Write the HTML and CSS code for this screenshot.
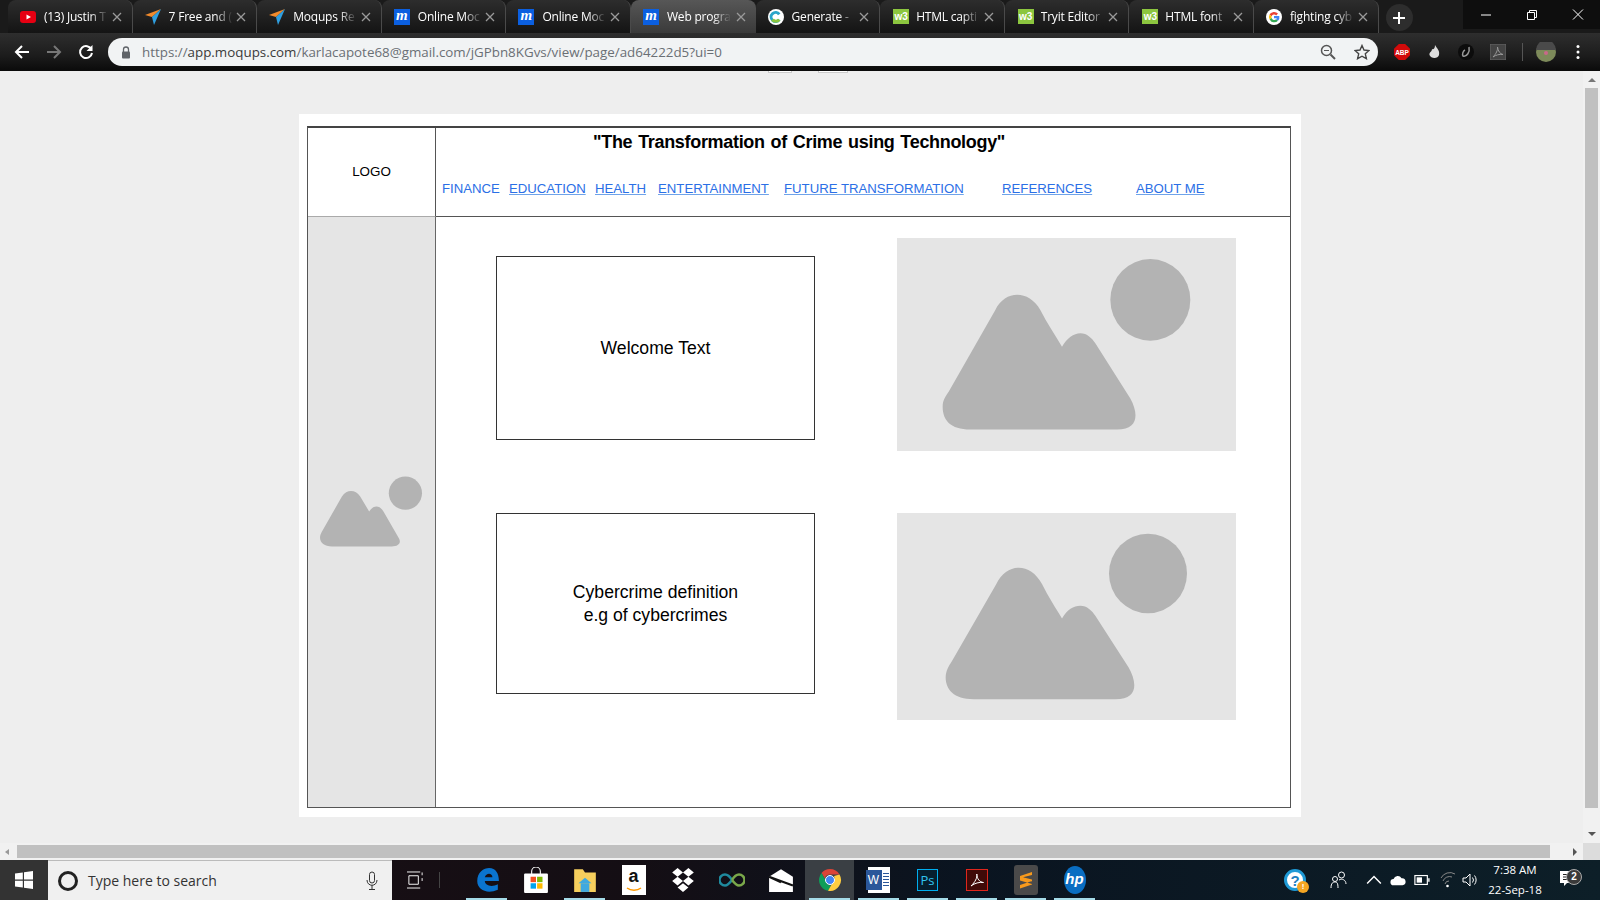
FILE: index.html
```html
<!DOCTYPE html>
<html lang="en">
<head>
<meta charset="utf-8">
<title>Web program</title>
<link rel="stylesheet" href="styles.css">
</head>
<body>
<svg class="defs" width="0" height="0" aria-hidden="true">
  <symbol id="plane" viewBox="0 0 16 16"><path d="M0 6 L16 0 L7 8 Z" fill="#f08a2c"/><path d="M16 0 L7 8 L9 16 Z" fill="#2f9fe0"/></symbol>
  <symbol id="close" viewBox="0 0 10 10"><path d="M1 1 L9 9 M9 1 L1 9" stroke="#9a9a9a" stroke-width="1.3" fill="none"/></symbol>
</svg>
<header class="tabstrip">
  <div class="tab">
    <svg class="favicon" viewBox="0 0 16 16"><rect x="0" y="2" width="16" height="12" rx="3" fill="#e60012"/><path d="M6.500 5.500 L11 8 L6.500 10.500 Z" fill="#fff"/></svg>
    <span class="tab-label">(13) Justin T</span>
    <svg class="tab-x"><use href="#close"/></svg>
  </div>
  <div class="tab">
    <svg class="favicon"><use href="#plane"/></svg>
    <span class="tab-label">7 Free and (</span>
    <svg class="tab-x"><use href="#close"/></svg>
  </div>
  <div class="tab">
    <svg class="favicon"><use href="#plane"/></svg>
    <span class="tab-label">Moqups Re</span>
    <svg class="tab-x"><use href="#close"/></svg>
  </div>
  <div class="tab">
    <span class="fav-m">m</span>
    <span class="tab-label">Online Moc</span>
    <svg class="tab-x"><use href="#close"/></svg>
  </div>
  <div class="tab">
    <span class="fav-m">m</span>
    <span class="tab-label">Online Moc</span>
    <svg class="tab-x"><use href="#close"/></svg>
  </div>
  <div class="tab tab-active">
    <span class="fav-m">m</span>
    <span class="tab-label">Web progra</span>
    <svg class="tab-x"><use href="#close"/></svg>
  </div>
  <div class="tab">
    <svg class="favicon" viewBox="0 0 16 16"><circle cx="8" cy="8" r="8" fill="#fff"/><path d="M12.500 4.500 A6 6 0 1 0 12.500 11.500 L10 9.800 A3 3 0 1 1 10 6.200 Z" fill="#2aa5c9"/><path d="M3 11.500 A6 6 0 0 0 12.500 11.500 L10 9.800 A3 3 0 0 1 6 9.800 Z" fill="#8cc63f"/></svg>
    <span class="tab-label">Generate -</span>
    <svg class="tab-x"><use href="#close"/></svg>
  </div>
  <div class="tab">
    <span class="fav-w3">w3</span>
    <span class="tab-label">HTML capti</span>
    <svg class="tab-x"><use href="#close"/></svg>
  </div>
  <div class="tab">
    <span class="fav-w3">w3</span>
    <span class="tab-label">Tryit Editor</span>
    <svg class="tab-x"><use href="#close"/></svg>
  </div>
  <div class="tab">
    <span class="fav-w3">w3</span>
    <span class="tab-label">HTML font</span>
    <svg class="tab-x"><use href="#close"/></svg>
  </div>
  <div class="tab">
    <svg class="favicon" viewBox="0 0 16 16"><circle cx="8" cy="8" r="8" fill="#fff"/><path d="M12 4.600 A5.300 5.300 0 0 0 3.600 5.600 L5.600 7.200 A2.800 2.800 0 0 1 10.200 6.400 Z" fill="#ea4335"/><path d="M3.600 5.600 A5.300 5.300 0 0 0 3.600 10.600 L5.600 9 A2.800 2.800 0 0 1 5.600 7.200 Z" fill="#fbbc05"/><path d="M3.600 10.600 A5.300 5.300 0 0 0 12 11.800 L10.200 10.200 A2.800 2.800 0 0 1 5.600 9 Z" fill="#34a853"/><path d="M13.300 7 H8 V9.200 H10.800 A2.800 2.800 0 0 1 10.200 10.200 L12 11.800 A5.300 5.300 0 0 0 13.300 7 Z" fill="#4285f4"/></svg>
    <span class="tab-label">fighting cyb</span>
    <svg class="tab-x"><use href="#close"/></svg>
  </div>
  <div class="newtab"><svg viewBox="0 0 14 14" width="14" height="14"><path d="M7 1 V13 M1 7 H13" stroke="#fff" stroke-width="2"/></svg></div>
  <div class="winctl">
    <svg viewBox="0 0 46 29"><path d="M18 15 H28" stroke="#fff"/></svg>
    <svg viewBox="0 0 46 29"><path d="M18.500 12.500 H25.500 V19.500 H18.500 Z M20.500 12.500 V10.500 H27.500 V17.500 H25.500" stroke="#fff" fill="none"/></svg>
    <svg viewBox="0 0 46 29"><path d="M18 9.500 L28 19.500 M28 9.500 L18 19.500" stroke="#fff" fill="none"/></svg>
  </div>
</header>
<nav class="toolbar">
  <svg class="tb-btn" viewBox="0 0 16 16"><path d="M15 8 H2 M8 2 L2 8 L8 14" stroke="#fff" stroke-width="2" fill="none"/></svg>
  <svg class="tb-btn" viewBox="0 0 16 16"><path d="M1 8 H14 M8 2 L14 8 L8 14" stroke="#777" stroke-width="2" fill="none"/></svg>
  <svg class="tb-btn" viewBox="0 0 16 16"><path d="M13.500 5.500 A6 6 0 1 0 14 9" stroke="#fff" stroke-width="2" fill="none"/><path d="M14.500 1 V7 H8.500 Z" fill="#fff"/></svg>
  <div class="omnibox">
    <svg class="lock" viewBox="0 0 10 13"><path d="M2.500 6 V3.500 A2.500 2.500 0 0 1 7.500 3.500 V6" stroke="#5f6368" stroke-width="1.300" fill="none"/><rect x="1" y="5.500" width="8" height="7" rx="1" fill="#5f6368"/></svg>
    <div class="url"><span class="url-dim">https://</span>app.moqups.com<span class="url-dim">/karlacapote68@gmail.com/jGPbn8KGvs/view/page/ad64222d5?ui=0</span></div>
    <svg class="omni-icon" viewBox="0 0 16 16"><circle cx="6.500" cy="6.500" r="5" stroke="#555" stroke-width="1.500" fill="none"/><path d="M10.500 10.500 L15 15" stroke="#555" stroke-width="2"/><path d="M4 6.500 H9" stroke="#555"/></svg>
    <svg class="omni-icon" viewBox="0 0 16 16"><path d="M8 1.500 L10 6 L15 6.500 L11.300 9.800 L12.400 14.700 L8 12.200 L3.600 14.700 L4.700 9.800 L1 6.500 L6 6 Z" stroke="#444" stroke-width="1.400" fill="none"/></svg>
  </div>
  <div class="ext abp"><span>ABP</span></div>
  <svg class="ext" viewBox="0 0 16 16"><path d="M9 1 C11 5 14 6 13 11 C12 15 5 15 3.500 11 C3 8 6 8 6 5 C7 6 9 5 9 1 Z" fill="#ddd"/></svg>
  <svg class="ext" viewBox="0 0 16 16"><circle cx="8" cy="8" r="8" fill="#0c0c0c"/><path d="M11 3 C12 8 9 13 5 12 C4 10 5 7 7 6" stroke="#999" stroke-width="1.500" fill="none"/></svg>
  <svg class="ext" viewBox="0 0 16 16"><rect width="16" height="16" fill="#444" stroke="#666"/><path d="M3 13 C6 10 8 6 7.500 3 C8 7 10 10 13 10.500 C9 10 6 11 3 13 Z" stroke="#999" fill="none"/></svg>
  <div class="tb-sep"></div>
  <svg class="avatar" viewBox="0 0 20 20"><circle cx="10" cy="10" r="10" fill="#7d8a5a"/><path d="M0 8 A10 10 0 0 1 20 8 Z" fill="#4a4a4a"/><circle cx="10" cy="11" r="2" fill="#c9688a"/></svg>
  <svg class="kebab" viewBox="0 0 4 16"><circle cx="2" cy="2.500" r="1.500" fill="#fff"/><circle cx="2" cy="8" r="1.500" fill="#fff"/><circle cx="2" cy="13.500" r="1.500" fill="#fff"/></svg>
</nav>
<div class="viewport">
  <main class="page">
    <div class="clip-strip">
      <span class="clip-box"></span>
      <span class="clip-box clip-box-b"></span>
    </div>
    <section class="canvas">
      <div class="frame">
        <div class="logo">LOGO</div>
        <div class="head">
          <h1 class="title">"The Transformation of Crime using Technology"</h1>
          <div class="links">
            <span class="lnk-plain">FINANCE</span>
            <a class="lnk">EDUCATION</a>
            <a class="lnk">HEALTH</a>
            <a class="lnk">ENTERTAINMENT</a>
            <a class="lnk">FUTURE TRANSFORMATION</a>
            <a class="lnk">REFERENCES</a>
            <a class="lnk">ABOUT ME</a>
          </div>
        </div>
        <aside class="side">
          <svg class="side-img" viewBox="50 40 325 230"><path d="M95 260 C65 260 50 240 65 215 L125 110 C140 88 165 88 180 110 L207 155 C220 135 238 135 250 155 L296 235 C305 250 295 260 275 260 Z" fill="#b3b3b3"/><circle cx="316" cy="100" r="50" fill="#b3b3b3"/></svg>
        </aside>
        <div class="content">
          <div class="box box-a">Welcome Text</div>
          <svg class="img img-a" viewBox="20 25 1017 637" preserveAspectRatio="none"><path d="M240 598 C180 598 157 570 157 530 C157 510 165 500 175 485 L315 240 C345 180 415 180 450 240 C470 280 495 315 515 350 C530 325 550 310 570 310 C590 310 605 325 615 340 L720 505 C745 550 745 598 680 598 Z" fill="#b3b3b3"/><ellipse cx="780" cy="210" rx="120" ry="122" fill="#b3b3b3"/></svg>
          <div class="box box-b"><span>Cybercrime definition</span><span>e.g of cybercrimes</span></div>
          <svg class="img img-b" viewBox="20 22 1017 620" preserveAspectRatio="none"><path d="M250 580 C190 580 166 550 166 515 C166 495 175 480 185 465 L318 235 C350 170 420 170 455 235 C475 275 495 305 515 338 C530 312 550 300 570 300 C590 300 605 315 615 330 L715 485 C740 530 745 580 675 580 Z" fill="#b3b3b3"/><ellipse cx="773" cy="203" rx="117" ry="119" fill="#b3b3b3"/></svg>
        </div>
      </div>
    </section>
  </main>
  <div class="vscroll">
    <span class="arrow-up"></span>
    <div class="vthumb"></div>
    <span class="arrow-down"></span>
  </div>
</div>
<div class="hscroll">
  <span class="arrow-left"></span>
  <div class="hthumb"></div>
  <span class="arrow-right"></span>
  <span class="corner"></span>
</div>
<footer class="taskbar">
  <div class="start"><svg viewBox="0 0 18 18" width="18" height="18"><path d="M0 2.500 L7.800 1.400 V8.500 H0 Z M9 1.200 L18 0 V8.500 H9 Z M0 9.700 H7.800 V16.600 L0 15.500 Z M9 9.700 H18 V18 L9 16.800 Z" fill="#fff"/></svg></div>
  <div class="search">
    <span class="cortana"></span>
    <span class="search-text">Type here to search</span>
    <svg class="mic" viewBox="0 0 12 20"><rect x="3.500" y="1" width="5" height="11" rx="2.500" fill="none" stroke="#333"/><path d="M1 9 C1 16 11 16 11 9 M6 14 V18 M3 18.500 H9" fill="none" stroke="#333"/></svg>
  </div>
  <div class="taskview"><svg viewBox="0 0 18 18" width="17" height="18"><path d="M0 .5 H14 M0 17.500 H14 M2 4.500 H12 V13.500 H2 Z M16 1 V4 M16 7 V10" stroke="#fff" fill="none"/></svg><span class="task-sep"></span></div>
  <div class="apps">
    <div class="app run"><svg viewBox="0 0 24 24" width="26" height="26"><path d="M3 13 C3 5 9 1 14 1 C20 1 23 6 23 13 H10 C10 17 16 19 22 16 V21 C13 25 3 22 3 13 Z M10 9.500 H17 C17 5 11 5 10 9.500 Z" fill="#0a74cf"/></svg></div>
    <div class="app"><svg viewBox="0 0 24 24" width="26" height="26"><path d="M8 7 V4 A4 4 0 0 1 16 4 V7" stroke="#fff" fill="none"/><rect x="1" y="6" width="22" height="18" rx="1" fill="#fff"/><rect x="7" y="9" width="5" height="5" fill="#f25022"/><rect x="13" y="9" width="5" height="5" fill="#7fba00"/><rect x="7" y="15" width="5" height="5" fill="#00a4ef"/><rect x="13" y="15" width="5" height="5" fill="#ffb900"/></svg></div>
    <div class="app run"><svg viewBox="0 0 24 24" width="26" height="26"><path d="M2 2 H10 L12 5 H22 V23 H2 Z" fill="#f6cf5d"/><path d="M8 23 V15 H16 V23 Z" fill="#3fa9e0"/><path d="M6 15 L12 10 L18 15 Z" fill="#3fa9e0"/></svg></div>
    <div class="app"><span class="amazon">a<svg class="smile" viewBox="0 0 16 5"><path d="M1 1 C5 4 11 4 15 1" stroke="#f90" stroke-width="1.500" fill="none"/></svg></span></div>
    <div class="app"><svg viewBox="0 0 24 24" width="26" height="26"><path d="M7 1 L12 5 L7 9 L2 5 Z M17 1 L22 5 L17 9 L12 5 Z M7 9 L12 13 L7 17 L2 13 Z M17 9 L22 13 L17 17 L12 13 Z M12 15 L17 19 L12 23 L7 19 Z" fill="#fff"/></svg></div>
    <div class="app"><svg viewBox="0 0 26 14" width="26" height="14"><path d="M13 7 C10 2 8 1.500 6 1.500 A5.500 5.500 0 0 0 6 12.500 C8 12.500 10 11 13 7" fill="none" stroke="#1f8a9e" stroke-width="2.500"/><path d="M13 7 C16 2 18 1.500 20 1.500 A5.500 5.500 0 0 1 20 12.500 C18 12.500 16 11 13 7" fill="none" stroke="#7aa84a" stroke-width="2.500"/></svg></div>
    <div class="app"><svg viewBox="0 0 24 24" width="26" height="26"><path d="M1 9 L12 2 L23 9 V23 H1 Z" fill="#fff"/><path d="M1 9 L23 17 M1 9 L12 14" stroke="#111" stroke-width="2" fill="none"/></svg></div>
    <div class="app run app-active"><svg viewBox="0 0 24 24" width="24" height="24"><path d="M12 1 A11 11 0 0 1 21.500 6.500 L12 6.500 A5.500 5.500 0 0 0 6.800 10.500 L3.500 5 A11 11 0 0 1 12 1 Z" fill="#db4437"/><path d="M3.500 5 L8 13 A5.500 5.500 0 0 0 13 17.500 L10 22.800 A11 11 0 0 1 3.500 5 Z" fill="#0f9d58"/><path d="M21.500 6.500 A11 11 0 0 1 10 22.800 L15 14 A5.500 5.500 0 0 0 16 8 Z" fill="#ffcd40"/><circle cx="12" cy="12" r="4.500" fill="#4285f4" stroke="#fff"/></svg></div>
    <div class="app run"><span class="word"><span class="word-w">W</span><span class="word-lines"></span></span></div>
    <div class="app run"><span class="ps">Ps</span></div>
    <div class="app run"><span class="acro"><svg viewBox="0 0 16 16" width="16" height="16"><path d="M2 14 C6 10 8.500 6 7.800 2 C8 7 10.500 10 14.500 10.500 C10 10 6 11 2 14 Z" stroke="#fff" fill="none"/></svg></span></div>
    <div class="app run"><span class="subl"><svg viewBox="0 0 14 18" width="14" height="18"><path d="M13 1 L1 5 V9.500 L13 13 V8.500 L4 6.300 L13 4 Z M1 9 L13 6 M1 14 L13 10 V13.500 L1 17.500 Z" fill="#f79a1c"/></svg></span></div>
    <div class="app run"><span class="hp">hp</span></div>
  </div>
  <div class="tray">
    <span class="help">?<span class="help-badge">!</span></span>
    <svg class="tray-i people" viewBox="0 0 18 18"><circle cx="11.500" cy="4" r="3" fill="none" stroke="#fff"/><circle cx="5" cy="8" r="2.500" fill="none" stroke="#fff"/><path d="M1 17 C1 12 3 11 5 11 C7 11 8 12 8 17 M9 9 C12 7 16 9 16 13" fill="none" stroke="#fff"/></svg>
    <svg class="tray-i" viewBox="0 0 14 14"><path d="M1 10 L7 4 L13 10" stroke="#fff" stroke-width="1.300" fill="none"/></svg>
    <svg class="tray-i" viewBox="0 0 18 14"><path d="M4 13 A3.500 3.500 0 0 1 4 6 A5 5 0 0 1 13 5 A4 4 0 0 1 14 13 Z" fill="#fff"/></svg>
    <svg class="tray-i tray-batt" viewBox="0 0 18 14"><rect x="1" y="2" width="14" height="10" fill="none" stroke="#fff" stroke-width="1.300"/><rect x="3" y="4" width="6" height="6" fill="#fff"/><rect x="16" y="5" width="1.500" height="4" fill="#fff"/></svg>
    <svg class="tray-i tray-wifi" viewBox="0 0 16 16"><path d="M1 6 A10 10 0 0 1 15 2 M3 9 A7 7 0 0 1 12 5 M5 12 A4 4 0 0 1 9 9" stroke="#888" fill="none"/><circle cx="7.500" cy="14" r="1.300" fill="#fff"/></svg>
    <svg class="tray-i" viewBox="0 0 16 16"><path d="M1 6 H4 L8 2 V14 L4 10 H1 Z M10.500 5.500 A4 4 0 0 1 10.500 10.500 M12.500 3.500 A7 7 0 0 1 12.500 12.500" stroke="#fff" fill="none"/></svg>
    <div class="clock"><span>7:38 AM</span><span>22-Sep-18</span></div>
    <div class="notif"><svg viewBox="0 0 16 18" width="16" height="18"><path d="M0 0 H16 V12 H7 L4 15 V12 H0 Z" fill="#fff"/><path d="M3 3.500 H13 M3 6 H13 M3 8.500 H13" stroke="#222"/></svg><span class="notif-n">2</span></div>
  </div>
</footer>
</body>
</html>
```
FILE: styles.css
```css
* { box-sizing: border-box; }
html, body { margin: 0; height: 900px; width: 1600px; overflow: hidden; }
body { display: flex; flex-direction: column; background: #eee; font-family: "Liberation Sans", Arial, sans-serif; }
.defs { position: absolute; }

/* Browser chrome */
.tabstrip { height: 33px; flex: none; display: flex; padding-left: 8px; background: #1a1a1a; }
.tab { width: 124.6px; height: 33px; flex: none; display: flex; align-items: center; padding: 0 10px 0 12px; border-right: 1px solid #4a4a4a; border-radius: 8px 8px 0 0; background: linear-gradient(#2d2d2d, #141414); color: #fff; font: 12px "Open Sans", "Noto Sans", sans-serif; letter-spacing: -0.2px; position: relative; }
.tab-active { background: linear-gradient(#575757, #3a3a3a); border-right: 0; }
.favicon { width: 16px; height: 16px; flex: none; }
.fav-m { width: 16px; height: 16px; flex: none; background: #0b5fe0; color: #fff; font: italic bold 15px/13px "Liberation Serif", serif; text-align: center; letter-spacing: 0; }
.fav-w3 { width: 16px; height: 15px; margin-left: 1px; margin-right: -1px; flex: none; background: #8cc63f; color: #fff; font: bold 10px/15px "Liberation Sans", sans-serif; text-align: center; letter-spacing: 0; }
.tab-label { margin-left: 8px; width: 64px; flex: none; white-space: nowrap; overflow: hidden; -webkit-mask-image: linear-gradient(90deg, #000 72%, transparent); mask-image: linear-gradient(90deg, #000 72%, transparent); }
.tab-x { width: 10px; height: 10px; margin-left: auto; flex: none; }
.newtab { width: 27px; height: 27px; margin: 4px 0 0 7px; border-radius: 50%; background: #2d2d2d; display: flex; align-items: center; justify-content: center; }
.winctl { margin-left: auto; width: 137px; height: 29px; display: flex; background: #0e0e0e; }
.winctl svg { width: 46px; height: 29px; flex: none; }

.toolbar { height: 38px; flex: none; display: flex; align-items: flex-start; padding: 5px 0 0 14px; background: linear-gradient(#2e2e2e 0, #1c1c1c 60%, #0a0a0a 100%); }
.tb-btn { width: 16px; height: 16px; margin: 6px 16px 0 0; flex: none; }
.omnibox { width: 1270px; height: 28px; margin-left: -2px; border-radius: 14px; background: #f1f3f4; display: flex; align-items: center; padding: 0 8px 0 13px; flex: none; }
.lock { width: 10px; height: 13px; flex: none; }
.url { margin-left: 11px; font: 13.36px "Open Sans", "Noto Sans", sans-serif; color: #3a3a3a; white-space: nowrap; }
.url-dim { color: #6a6f74; }
.omni-icon { width: 16px; height: 16px; flex: none; margin-left: 18px; }
.url + .omni-icon { margin-left: auto; }
.ext { width: 16px; height: 16px; flex: none; margin: 6px 0 0 16px; }
.abp { clip-path: polygon(30% 0, 70% 0, 100% 30%, 100% 70%, 70% 100%, 30% 100%, 0 70%, 0 30%); background: #d20a0a; display: flex; align-items: center; justify-content: center; color: #fff; font: bold 6.5px "Liberation Sans", sans-serif; }
.tb-sep { width: 1px; height: 18px; margin: 5px 0 0 16px; background: #555; }
.avatar { width: 20px; height: 20px; margin: 4px 0 0 13px; flex: none; }
.kebab { width: 4px; height: 16px; margin: 6px 0 0 20px; flex: none; }

/* Viewport */
.viewport { height: 772px; flex: none; display: flex; }
.page { width: 1583px; flex: none; background: #eee; }
.clip-strip { height: 43px; display: flex; align-items: flex-start; overflow: hidden; }
.clip-box { width: 24px; height: 2px; margin-left: 768px; background: #fff; border: 1px solid #ccc; border-top: 0; }
.clip-box-b { width: 30px; margin-left: 26px; }

.canvas { width: 1002px; height: 703px; margin-left: 299px; padding: 12px 10px 8px 8px; background: #fff; }
.frame { height: 682px; width: 984px; display: grid; grid-template-columns: 128px 1fr; grid-template-rows: 89px 1fr; border: 1px solid #555; border-top-width: 2px; border-top-color: #444; }
.logo { display: flex; align-items: center; justify-content: center; font-size: 13.4px; padding-bottom: 1px; color: #000; border-right: 1px solid #555; border-bottom: 1px solid #aaa; }
.head { border-bottom: 1px solid #555; padding: 2px 0 0 6px; }
.title { margin: 0; padding-left: 151px; font-size: 18px; line-height: 24px; font-weight: 700; letter-spacing: -0.32px; color: #000; word-spacing: 1.2px; white-space: nowrap; }
.links { display: grid; grid-template-columns: 67px 86px 63px 126px 218px 134px auto; margin-top: 26px; font-size: 13.2px; line-height: 18px; color: #2b6fe6; white-space: nowrap; justify-items: start; }
.lnk { text-decoration: underline; text-decoration-color: #6fa3ea; }

.side { background: #e5e5e5; border-right: 1px solid #666; display: flex; align-items: center; justify-content: center; }
.side-img { width: 108px; height: 77px; margin: 0 2px 2px 0; display: block; }

.content { display: grid; grid-template-columns: 319px 339px; grid-template-rows: 213px 207px; column-gap: 82px; row-gap: 62px; padding: 21px 0 0 60px; background: #fff; align-content: start; }
.box { border: 1px solid #333; background: #fff; display: flex; flex-direction: column; align-items: center; justify-content: center; font-size: 17.6px; line-height: 23px; color: #000; }
.box-a { height: 184px; margin-top: 18px; }
.box-b { height: 181px; }
.img { width: 339px; display: block; background: #e5e5e5; }
.img-a { height: 213px; }
.img-b { height: 207px; }

/* Scrollbars */
.vscroll { width: 17px; flex: none; background: #f1f1f1; display: flex; flex-direction: column; align-items: center; }
.arrow-up { margin-top: 7px; border: 4px solid transparent; border-bottom: 4px solid #777; border-top: 0; }
.vthumb { width: 13px; height: 720px; margin-top: 6px; background: #c0c0c0; }
.arrow-down { margin-top: 24px; border: 4px solid transparent; border-top: 4px solid #555; border-bottom: 0; }
.hscroll { height: 17px; flex: none; display: flex; align-items: center; background: #f1f1f1; }
.arrow-left { margin-left: 5px; border: 3.500px solid transparent; border-right: 4px solid #999; border-left: 0; }
.hthumb { width: 1533px; height: 13px; margin: 0 0 1px 8px; background: #c0c0c0; }
.arrow-right { margin-left: 23px; border: 4px solid transparent; border-left: 4px solid #555; border-right: 0; }
.corner { width: 17px; height: 17px; margin-left: auto; background: #dcdcdc; }

/* Taskbar */
.taskbar { height: 40px; flex: none; display: flex; align-items: stretch; background: linear-gradient(90deg, #1a0f14 0, #140e14 40%, #0a1420 60%, #0d1f28 100%); color: #fff; font: 12px "Open Sans", "Noto Sans", sans-serif; }
.start { width: 48px; display: flex; align-items: center; justify-content: center; background: #333; }
.search { width: 344px; background: #f0f0f0; border-top: 1px solid #bbb; display: flex; align-items: center; padding: 0 14px 0 10px; color: #333; }
.cortana { width: 20px; height: 20px; border-radius: 50%; border: 3px solid #222; }
.search-text { margin-left: 10px; font-size: 14px; }
.mic { width: 12px; height: 20px; margin-left: auto; }
.taskview { width: 70px; display: flex; align-items: center; padding-left: 15px; }
.task-sep { width: 1px; height: 16px; margin-left: 15px; background: #444; }
.apps { display: flex; height: 100%; }
.app { width: 49px; display: flex; align-items: center; justify-content: center; position: relative; }
.app.run::after { content: ""; position: absolute; left: 4px; right: 4px; bottom: 0; height: 2px; background: #a5dbe8; }
.app-active { background: #3a3f44; }
.amazon { width: 24px; height: 30px; background: #fff; color: #111; font: bold 18px/22px "Liberation Sans", sans-serif; text-align: center; display: flex; flex-direction: column; align-items: center; }
.smile { width: 16px; height: 5px; display: block; }
.word { width: 22px; height: 26px; background: #fff; position: relative; display: block; }
.word-w { position: absolute; left: -2px; top: 3px; width: 16px; height: 20px; background: #2b579a; color: #fff; font: 12px/20px "Liberation Sans", sans-serif; text-align: center; }
.word-lines { position: absolute; right: 1px; top: 6px; width: 6px; height: 14px; background: repeating-linear-gradient(#2b579a 0 1px, #fff 1px 3px); }
.ps { width: 21px; height: 22px; background: #061e2e; border: 1px solid #00aeef; color: #31c5f0; font: 13px/20px "Open Sans", sans-serif; text-align: center; }
.acro { width: 22px; height: 22px; background: #400a08; border: 1px solid #e0261c; display: flex; align-items: center; justify-content: center; }
.subl { width: 24px; height: 30px; border-radius: 3px; background: #4a4a4a; display: flex; align-items: center; justify-content: center; }
.hp { width: 22px; height: 28px; border-radius: 50%; background: #0a6ec2; color: #fff; font: italic bold 15px/26px "Liberation Sans", sans-serif; text-align: center; }
.tray { margin-left: auto; display: flex; align-items: center; padding-right: 12px; }
.help { width: 22px; height: 22px; border-radius: 50%; background: #fff; border: 3px solid #1f9ad6; color: #1f7fc0; font: bold 15px/17px "Liberation Sans", sans-serif; text-align: center; margin-right: 24px; position: relative; }
.help-badge { position: absolute; right: -6px; bottom: -5px; width: 12px; height: 12px; border-radius: 50%; background: #f5a623; color: #fff; font: bold 8px/12px "Liberation Sans", sans-serif; }
.tray-i { width: 16px; height: 16px; margin-right: 8px; flex: none; }
.tray-batt { margin-right: 10px; }
.tray-wifi { margin-right: 6px; }
.people { width: 18px; height: 18px; margin-right: 18px; }
.clock { display: flex; flex-direction: column; align-items: center; margin: 0 3px 0 -1px; line-height: 20px; width: 60px; font-size: 11.5px; }
.notif { width: 40px; position: relative; display: flex; align-items: center; justify-content: center; }
.notif-n { position: absolute; right: 6px; bottom: 4px; width: 16px; height: 16px; border-radius: 50%; background: #3a3a3a; border: 1px solid #aaa; font: bold 10px/14px "Liberation Sans", sans-serif; text-align: center; }
```
